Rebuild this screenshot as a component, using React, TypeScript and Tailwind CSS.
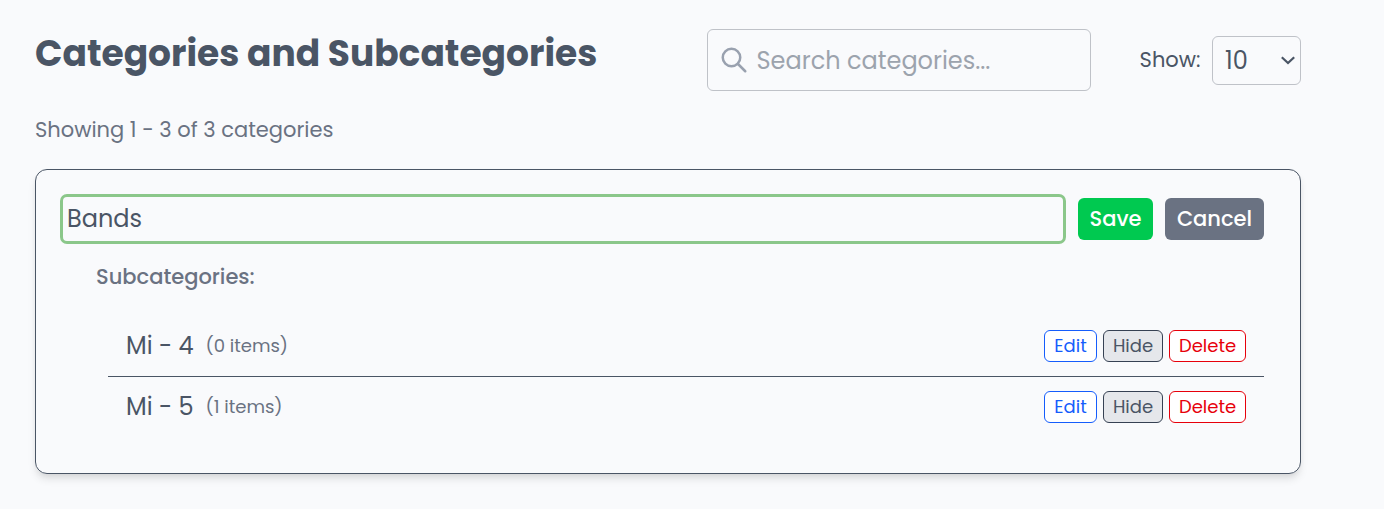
import React from "react";

function Fit({ children, className = "" }: { children: React.ReactNode; className?: string }) {
  return <span className={"inline-block whitespace-nowrap " + className}>{children}</span>;
}

function Row({ name, items, last }: { name: string; items: string; last?: boolean }) {
  return (
    <li
      className={
        "flex items-center justify-between px-[18px] " +
        (last ? "h-[60px]" : "h-[61px] border-b border-[#4a5565]")
      }
    >
      <div className="flex items-center">
        <Fit className="w-[79.5px] text-[24px] text-[#4a5565]">{name}</Fit>
        <Fit className="pb-px text-[18px] text-[#6a7282]">{items}</Fit>
      </div>
      <div className="flex gap-[6px] text-[18px] leading-[28px]">
        <button className="h-8 w-[53px] rounded-[6px] border border-[#155dfc] bg-white text-[#155dfc]">Edit</button>
        <button className="h-8 w-[60px] rounded-[6px] border border-[#364153] bg-[#e5e7eb] text-[#4a5565]">Hide</button>
        <button className="h-8 w-[77px] rounded-[6px] border border-[#e7000b] bg-white text-[#e7000b]">Delete</button>
      </div>
    </li>
  );
}

export default function App() {
  return (
    <main className="h-[509px] overflow-hidden bg-[#f9fafc] pr-[83px] pl-[35px] font-[Poppins,Inter,sans-serif] text-[#4a5565]">
      <header className="flex items-start pt-[29px]">
        <h1 className="w-[672px] pt-px text-[36px] leading-[48px] font-bold whitespace-nowrap">
          <Fit>Categories and Subcategories</Fit>
        </h1>
        <div className="flex h-[62px] w-[384px] items-center rounded-[6px] border border-[#bfc2c8] pl-[11px]">
          <svg className="h-[30px] w-[30px]" viewBox="0 0 24 24" fill="none" stroke="#99a1af" strokeWidth="2" strokeLinecap="round" strokeLinejoin="round">
            <path d="M21 21l-6-6m2-5a7 7 0 11-14 0 7 7 0 0114 0z" />
          </svg>
          <Fit className="ml-[7.5px] pt-px text-[24px] text-[#9ca3ad]">Search categories...</Fit>
        </div>
        <div className="flex h-[62px] grow items-center justify-end">
          <Fit className="text-[21px]">Show:</Fit>
          <div className="ml-[11.5px] flex h-[49px] w-[89px] items-center justify-between rounded-[6px] border border-[#bfc2c8] pr-[5px] pl-3 text-[24px]">
            <Fit className="pt-[2px]">10</Fit>
            <svg className="h-[15px] w-[15px]" viewBox="0 0 15 15" fill="none" stroke="#4a5565" strokeWidth="2.2">
              <path d="M1.8 4.2L8 10L14.2 4.2" />
            </svg>
          </div>
        </div>
      </header>
      <p className="mt-[23px] h-8 text-[21px] leading-8 text-[#6a7282]">
        <Fit>Showing 1 - 3 of 3 categories</Fit>
      </p>
      <section className="mt-[23px] h-[305px] rounded-[12px] border border-[#4a5565] px-6 pt-6 shadow-[0_6px_9px_-1.5px_rgba(0,0,0,0.1),0_3px_6px_-3px_rgba(0,0,0,0.1)]">
        <div className="flex items-center pr-3">
          <div className="flex h-[50px] w-[1006px] items-center rounded-[7px] border-[3px] border-[#8bc78a] pl-1 text-[24px]">
            <Fit>Bands</Fit>
          </div>
          <button className="ml-3 h-[42px] w-[75px] rounded-[6px] bg-[#00c950] text-[21px] font-medium text-white">Save</button>
          <button className="ml-3 h-[42px] w-[99px] rounded-[6px] bg-[#6a7282] text-[21px] font-medium text-white">Cancel</button>
        </div>
        <h2 className="mt-[17px] ml-9 h-8 text-[21px] leading-8 font-medium text-[#6a7282]">
          <Fit>Subcategories:</Fit>
        </h2>
        <ul className="mt-[23px] mr-3 ml-12">
          <Row name="Mi - 4" items="(0 items)" />
          <Row name="Mi - 5" items="(1 items)" last />
        </ul>
      </section>
    </main>
  );
}
